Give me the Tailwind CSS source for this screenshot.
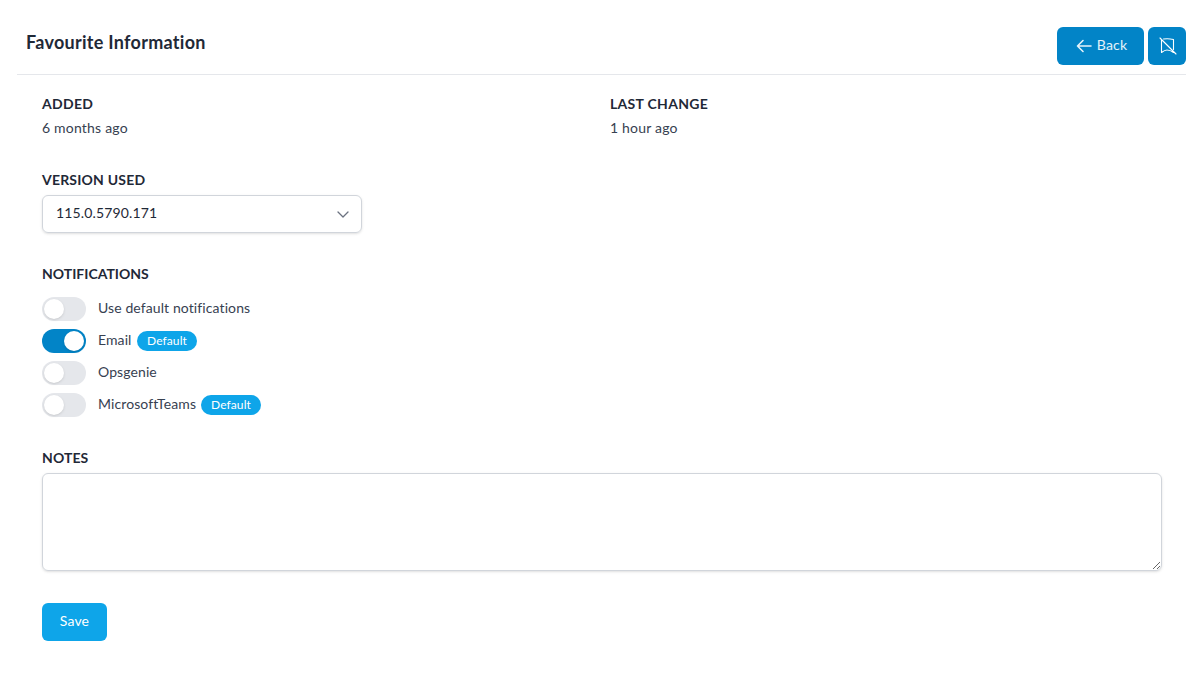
<!DOCTYPE html>
<html lang="en">
<head>
    <meta charset="UTF-8">
    <title>Favourite Information</title>
    <script src="https://cdn.jsdelivr.net/npm/@tailwindcss/browser@4"></script>
</head>
<body class="bg-white font-['Lato','Noto_Sans',sans-serif] tracking-[0.1px] text-[#1f2937]">
    <div class="h-[679px] pl-[17px] pr-[17px]">
        <!-- Header -->
        <div class="flex h-[75px] items-start justify-between border-b border-[#e5e7eb] pl-[9px]">
            <h1 class="mt-[29px] text-[18px] leading-[26px] font-bold tracking-[0.28px] text-[#1f2937]">Favourite Information</h1>
            <div class="mt-[27px] flex gap-1">
                <button class="flex h-[38px] w-[87px] items-center justify-center gap-[5px] rounded-md bg-[#0284c7] pl-[2px] text-sm tracking-[0.15px] text-white/90">
                    <svg class="h-4 w-4" viewBox="0 0 16 16" fill="none" stroke="currentColor" stroke-width="1.6" stroke-linecap="round" stroke-linejoin="round"><path d="M15 8H1.500M7 2.500L1.500 8 7 13.500"/></svg>
                    <span class="pb-[2px]">Back</span>
                </button>
                <button class="flex h-[38px] w-[38px] items-center justify-center rounded-md bg-[#0284c7] pl-px text-white">
                    <svg class="h-[18px] w-[18px]" viewBox="0 0 18 18" fill="none" stroke="currentColor" stroke-width="1.1" stroke-linecap="round" stroke-linejoin="round"><path d="M1 1l16 16M4.500 2c3-0.500 6-0.500 10 0.500V12.500M2.500 3v12.500c2-1.500 4-2.500 5.500-2.500 2 0 4.500 1 6.500 2.500"/></svg>
                </button>
            </div>
        </div>

        <div class="ml-[25px] w-[1120px]">
            <!-- Dates -->
            <div class="grid grid-cols-2 gap-4 pt-[19px]">
                <div>
                    <div class="text-sm leading-5 font-bold tracking-[0.3px]">ADDED</div>
                    <div class="mt-1 text-sm leading-5 tracking-[0.2px] text-[#374151]">6 months ago</div>
                </div>
                <div>
                    <div class="text-sm leading-5 font-bold tracking-[0.3px]">LAST CHANGE</div>
                    <div class="mt-1 text-sm leading-5 tracking-[0.2px] text-[#374151]">1 hour ago</div>
                </div>
            </div>

            <!-- Version -->
            <div class="mt-8">
                <div class="text-sm leading-5 font-bold tracking-[0.2px]">VERSION USED</div>
                <div class="mt-[5px] flex h-[38px] w-[320px] items-center justify-between rounded-md border border-[#d1d5db] pr-[12px] pl-[13px] text-sm tracking-[0.15px] text-[#1f2937] shadow-sm">
                    <span class="pb-[2px]">115.0.5790.171</span>
                    <svg class="h-3 w-3 text-[#6b7280]" viewBox="0 0 12 12" fill="none" stroke="currentColor" stroke-width="1.3" stroke-linecap="round" stroke-linejoin="round"><path d="M1 4l5 5 5-5"/></svg>
                </div>
            </div>

            <!-- Notifications -->
            <div class="mt-[31px]">
                <div class="text-sm leading-5 font-bold tracking-normal">NOTIFICATIONS</div>
                <div class="mt-[13px] flex flex-col gap-2 text-sm text-[#374151]">
                    <div class="flex h-6 items-center">
                        <span class="flex h-6 w-11 items-center rounded-full bg-[#e5e7eb] p-0.5"><span class="h-5 w-5 rounded-full bg-white shadow"></span></span>
                        <span class="ml-3 pb-[2px]">Use default notifications</span>
                    </div>
                    <div class="flex h-6 items-center">
                        <span class="flex h-6 w-11 items-center justify-end rounded-full bg-[#0284c7] p-0.5"><span class="h-5 w-5 rounded-full bg-white shadow"></span></span>
                        <span class="ml-3 w-[35px] pb-[2px]">Email</span>
                        <span class="ml-1 flex h-5 w-[60px] items-center justify-center rounded-full bg-[#0ea5e9] text-xs tracking-[0.1px] text-white">Default</span>
                    </div>
                    <div class="flex h-6 items-center">
                        <span class="flex h-6 w-11 items-center rounded-full bg-[#e5e7eb] p-0.5"><span class="h-5 w-5 rounded-full bg-white shadow"></span></span>
                        <span class="ml-3 pb-[2px]">Opsgenie</span>
                    </div>
                    <div class="flex h-6 items-center">
                        <span class="flex h-6 w-11 items-center rounded-full bg-[#e5e7eb] p-0.5"><span class="h-5 w-5 rounded-full bg-white shadow"></span></span>
                        <span class="ml-3 w-[99px] pb-[2px]">MicrosoftTeams</span>
                        <span class="ml-1 flex h-5 w-[60px] items-center justify-center rounded-full bg-[#0ea5e9] text-xs tracking-[0.1px] text-white">Default</span>
                    </div>
                </div>
            </div>

            <!-- Notes -->
            <div class="mt-[31px]">
                <div class="text-sm leading-5 font-bold">NOTES</div>
                <textarea class="mt-[5px] block h-[98px] w-full rounded-md border border-[#d1d5db] shadow-sm"></textarea>
            </div>

            <button class="mt-8 h-[38px] w-[65px] rounded-md bg-[#0ea5e9] pb-[2px] text-sm tracking-[0.15px] text-white">Save</button>
        </div>
    </div>
</body>
</html>
